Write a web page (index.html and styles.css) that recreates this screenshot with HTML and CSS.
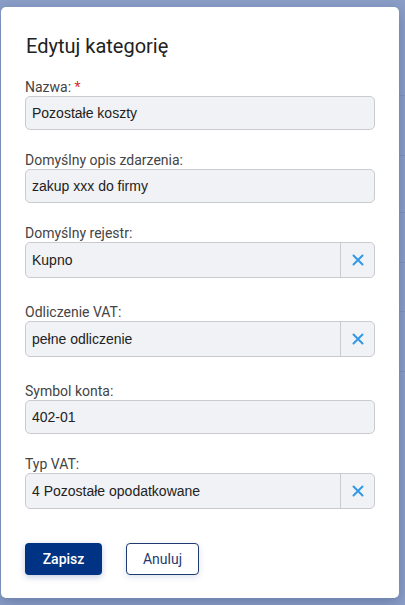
FILE: index.html
```html
<!DOCTYPE html>
<html lang="pl">
<head>
<meta charset="utf-8">
<title>Edytuj kategorię</title>
<link rel="stylesheet" href="styles.css">
</head>
<body>
<div class="backdrop">
  <div class="line l1"></div><div class="line l2"></div><div class="line l3"></div><div class="line l4"></div><div class="line l5"></div><div class="line l6"></div>
  <div class="modal">
    <h1 class="title">Edytuj kategorię</h1>
    <div class="field">
      <label class="label">Nazwa: <span class="req">*</span></label>
      <div class="input">Pozostałe koszty</div>
    </div>
    <div class="field">
      <label class="label">Domyślny opis zdarzenia:</label>
      <div class="input">zakup xxx do firmy</div>
    </div>
    <div class="field field-select">
      <label class="label">Domyślny rejestr:</label>
      <div class="select">
        <div class="select-value">Kupno</div>
        <div class="clear"><svg width="14" height="14" viewBox="0 0 14 14"><path d="M2.5 2.5 L11.5 11.5 M11.5 2.5 L2.5 11.5" stroke="#3199e6" stroke-width="2" stroke-linecap="round" fill="none"/></svg></div>
      </div>
    </div>
    <div class="field field-select">
      <label class="label">Odliczenie VAT:</label>
      <div class="select">
        <div class="select-value">pełne odliczenie</div>
        <div class="clear"><svg width="14" height="14" viewBox="0 0 14 14"><path d="M2.5 2.5 L11.5 11.5 M11.5 2.5 L2.5 11.5" stroke="#3199e6" stroke-width="2" stroke-linecap="round" fill="none"/></svg></div>
      </div>
    </div>
    <div class="field">
      <label class="label">Symbol konta:</label>
      <div class="input">402-01</div>
    </div>
    <div class="field field-select last">
      <label class="label">Typ VAT:</label>
      <div class="select">
        <div class="select-value">4 Pozostałe opodatkowane</div>
        <div class="clear"><svg width="14" height="14" viewBox="0 0 14 14"><path d="M2.5 2.5 L11.5 11.5 M11.5 2.5 L2.5 11.5" stroke="#3199e6" stroke-width="2" stroke-linecap="round" fill="none"/></svg></div>
      </div>
    </div>
    <div class="actions">
      <button class="btn btn-primary">Zapisz</button>
      <button class="btn btn-outline">Anuluj</button>
    </div>
  </div>
</div>
</body>
</html>
```
FILE: styles.css
```css
html, body {
  margin: 0;
  padding: 0;
}
body {
  width: 405px;
  height: 605px;
  overflow: hidden;
  background: #8a9ec7;
  font-family: Roboto, "Liberation Sans", sans-serif;
}
.backdrop {
  position: relative;
  width: 405px;
  height: 605px;
  padding: 7px 6px 7px 1px;
  box-sizing: border-box;
}
.line {
  position: absolute;
  right: 0;
  width: 6px;
  height: 1px;
  background: #7f93bb;
}
.l1 { top: 95px; } .l2 { top: 155px; } .l3 { top: 212px; } .l4 { top: 262px; } .l5 { top: 311px; } .l6 { top: 371px; }
.modal {
  position: relative;
  background: #fff;
  border-radius: 5px;
  height: 591px;
  box-sizing: border-box;
  padding: 27px 24px 0 24px;
  box-shadow: 0 4px 14px rgba(40, 60, 110, 0.35);
}
.title {
  margin: 0 0 21px 1px;
  font-size: 20px;
  line-height: 24px;
  font-weight: 400;
  color: #222;
}
.field {
  margin-bottom: 22px;
}
.field-select {
  margin-bottom: 26px;
}
.field.last {
  margin-bottom: 34px;
}
.label {
  display: block;
  font-size: 14px;
  line-height: 16px;
  color: #444;
  margin-bottom: 1px;
}
.req {
  color: #d32f2f;
}
.input, .select {
  box-sizing: border-box;
  height: 34px;
  background: #f1f2f6;
  border: 1px solid #cacbd0;
  border-radius: 5px;
  font-family: "Liberation Sans", Arial, sans-serif;
  font-size: 14px;
  color: #222;
}
.input {
  display: flex;
  align-items: center;
  padding: 0 6px;
}
.select {
  height: 36px;
  display: flex;
  align-items: stretch;
}
.select-value {
  flex: 1;
  display: flex;
  align-items: center;
  padding: 0 6px;
}
.clear {
  width: 33px;
  border-left: 1px solid #cacbd0;
  display: flex;
  align-items: center;
  justify-content: center;
}
.clear svg {
  display: block;
}
.actions {
  display: flex;
  gap: 24px;
}
.btn {
  height: 32px;
  border-radius: 4px;
  font-family: Roboto, sans-serif;
  font-size: 14px;
  font-weight: 500;
  padding: 0;
  cursor: pointer;
}
.btn-primary {
  width: 77px;
  background: #003383;
  color: #fff;
  border: none;
  box-shadow: 0 2px 6px rgba(0, 51, 131, 0.25);
}
.btn-outline {
  width: 73px;
  background: #fff;
  color: #1e3a70;
  border: 1px solid #1e3a70;
  font-weight: 400;
  box-shadow: 0 2px 6px rgba(0, 51, 131, 0.15);
}
```
